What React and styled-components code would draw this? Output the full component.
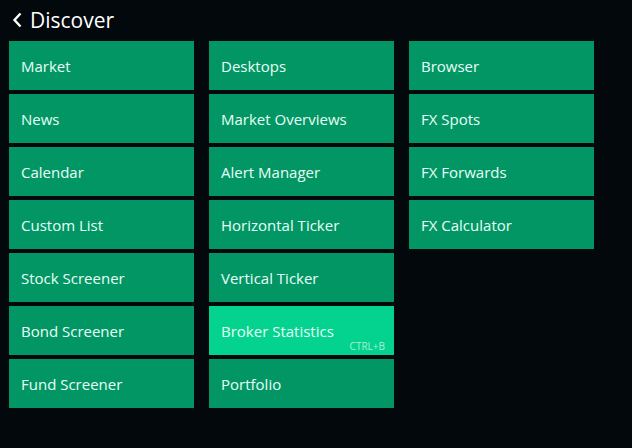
import React from 'react';
import styled, { createGlobalStyle } from 'styled-components';

const GlobalStyle = createGlobalStyle`
  html, body {
    margin: 0;
    background: #02080c;
  }
  body {
    font-family: 'Open Sans', 'Noto Sans', sans-serif;
  }
`;

const columns = [
  ['Market', 'News', 'Calendar', 'Custom List', 'Stock Screener', 'Bond Screener', 'Fund Screener'],
  ['Desktops', 'Market Overviews', 'Alert Manager', 'Horizontal Ticker', 'Vertical Ticker', 'Broker Statistics', 'Portfolio'],
  ['Browser', 'FX Spots', 'FX Forwards', 'FX Calculator']
];

const shortcuts = { 'Broker Statistics': 'CTRL+B' };
const activeItem = 'Broker Statistics';

const Page = styled.div`
  width: 632px;
  height: 448px;
  padding: 6px 0 0 9px;
  box-sizing: border-box;
  color: #f2fff9;
`;

const Header = styled.div`
  display: flex;
  align-items: center;
  gap: 8px;
  height: 28px;
  padding-left: 3px;
  margin-bottom: 7px;
  font-size: 21px;
  color: #ffffff;
`;

const Grid = styled.div`
  display: flex;
  gap: 15px;
  align-items: flex-start;
`;

const Column = styled.div`
  display: flex;
  flex-direction: column;
  gap: 4px;
  width: 185px;
`;

const Tile = styled.div`
  position: relative;
  height: 49px;
  display: flex;
  align-items: center;
  padding-left: 12px;
  font-size: 15px;
  color: #e8fff6;
  background: ${p => (p.$active ? '#03d38e' : '#039665')};
  cursor: pointer;
`;

const Shortcut = styled.span`
  position: absolute;
  right: 9px;
  bottom: 2px;
  font-size: 10px;
  color: #a6f0d2;
`;

export default function App() {
  return (
    <>
      <GlobalStyle />
      <Page>
        <Header>
          <svg width="10" height="16" viewBox="0 0 10 16">
            <path d="M8.5 1.5 L2.5 8 L8.5 14.5" fill="none" stroke="#fff" strokeWidth="2.4" />
          </svg>
          Discover
        </Header>
        <Grid>
          {columns.map((col, i) => (
            <Column key={i}>
              {col.map(name => (
                <Tile key={name} $active={name === activeItem}>
                  {name}
                  {shortcuts[name] && <Shortcut>{shortcuts[name]}</Shortcut>}
                </Tile>
              ))}
            </Column>
          ))}
        </Grid>
      </Page>
    </>
  );
}
